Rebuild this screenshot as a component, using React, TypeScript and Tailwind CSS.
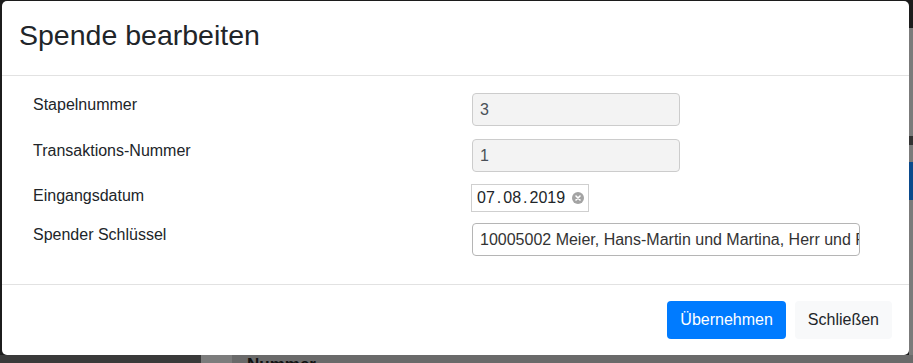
import React from "react";

const font = { fontFamily: '"Liberation Sans", Arial, sans-serif' };

export default function App() {
  return (
    <div className="relative w-[913px] h-[363px] overflow-hidden bg-[#1c1c1c]" style={font}>
      {/* underlying page under the backdrop */}
      <div className="absolute left-[909px] top-[28px] w-[4px] h-[335px] bg-[#7b7b7b]">
        <div className="absolute top-[108px] left-0 w-[4px] h-[9px] bg-[#333]" />
        <div className="absolute top-[134px] left-0 w-[4px] h-[38px] bg-[#0b4a8c]" />
      </div>
      <div className="absolute left-0 top-[355px] w-[913px] h-[8px] flex">
        <div className="w-[201px] bg-[#3a3a3a]" />
        <div className="w-[31px] bg-[#7c7c7c]" />
        <div className="flex-1 bg-[#6a6a6a] pl-[15px] text-[17px] font-bold leading-[20px] text-[#111]">Nummer</div>
      </div>

      {/* modal */}
      <div className="absolute left-[2px] top-[1px] w-[907px] h-[354px] bg-white rounded-[5px] flex flex-col overflow-hidden">
        <div className="h-[75px] shrink-0 border-b border-[#e2e2e2] pl-[17px] pt-[17px]">
          <h5 className="text-[28.5px] leading-[34px] text-[#212529]">Spende bearbeiten</h5>
        </div>
        <div className="pl-[31px] pt-[15px] pb-[28px] text-[16px] text-[#212529]">
          <div className="flex h-[46px]">
            <div className="w-[439px] pt-[2px] leading-6">Stapelnummer</div>
            <div className="mt-[2px] h-[33px] w-[208px] rounded-[4px] border border-[#cccccc] bg-[#f3f3f3] pl-[7px] leading-[31px] text-[#495057]">3</div>
          </div>
          <div className="flex h-[46px]">
            <div className="w-[439px] pt-[2px] leading-6">Transaktions-Nummer</div>
            <div className="mt-[2px] h-[33px] w-[208px] rounded-[4px] border border-[#cccccc] bg-[#f3f3f3] pl-[7px] leading-[31px] text-[#495057]">1</div>
          </div>
          <div className="flex h-[38px]">
            <div className="w-[439px] pt-[1px] leading-6">Eingangsdatum</div>
            <div className="ml-[-1px] mt-[1px] h-[28px] w-[118px] border border-[#cfcfcf] bg-white pl-[5px] flex items-center text-[#212529]">
              <span>07</span>
              <span className="mx-[2px]">.</span>
              <span>08</span>
              <span className="mx-[2px]">.</span>
              <span>2019</span>
              <svg className="ml-[7px] shrink-0" width="12" height="12" viewBox="0 0 12 12">
                <circle cx="6" cy="6" r="6" fill="#a3a3a3" />
                <path d="M4 4 L8 8 M8 4 L4 8" stroke="#fff" strokeWidth="1.6" strokeLinecap="round" />
              </svg>
            </div>
          </div>
          <div className="flex h-[35px]">
            <div className="w-[439px] pt-[2px] leading-6">Spender Schlüssel</div>
            <div className="mt-[2px] h-[33px] w-[388px] rounded-[4px] border border-[#b5b5b5] bg-white pl-[7px] leading-[31px] text-[#333] overflow-hidden whitespace-nowrap">
              10005002 Meier, Hans-Martin und Martina, Herr und Frau
            </div>
          </div>
        </div>
        <div className="border-t border-[#e2e2e2] flex-1 flex justify-end items-start pt-[16px] pr-[17px] gap-[9px]">
          <button className="h-[38px] px-[13px] rounded-[4px] bg-[#007bff] text-white text-[16px] leading-6">Übernehmen</button>
          <button className="h-[38px] px-[13px] rounded-[4px] bg-[#f8f9fa] text-[#212529] text-[16px] leading-6">Schließen</button>
        </div>
      </div>
    </div>
  );
}
